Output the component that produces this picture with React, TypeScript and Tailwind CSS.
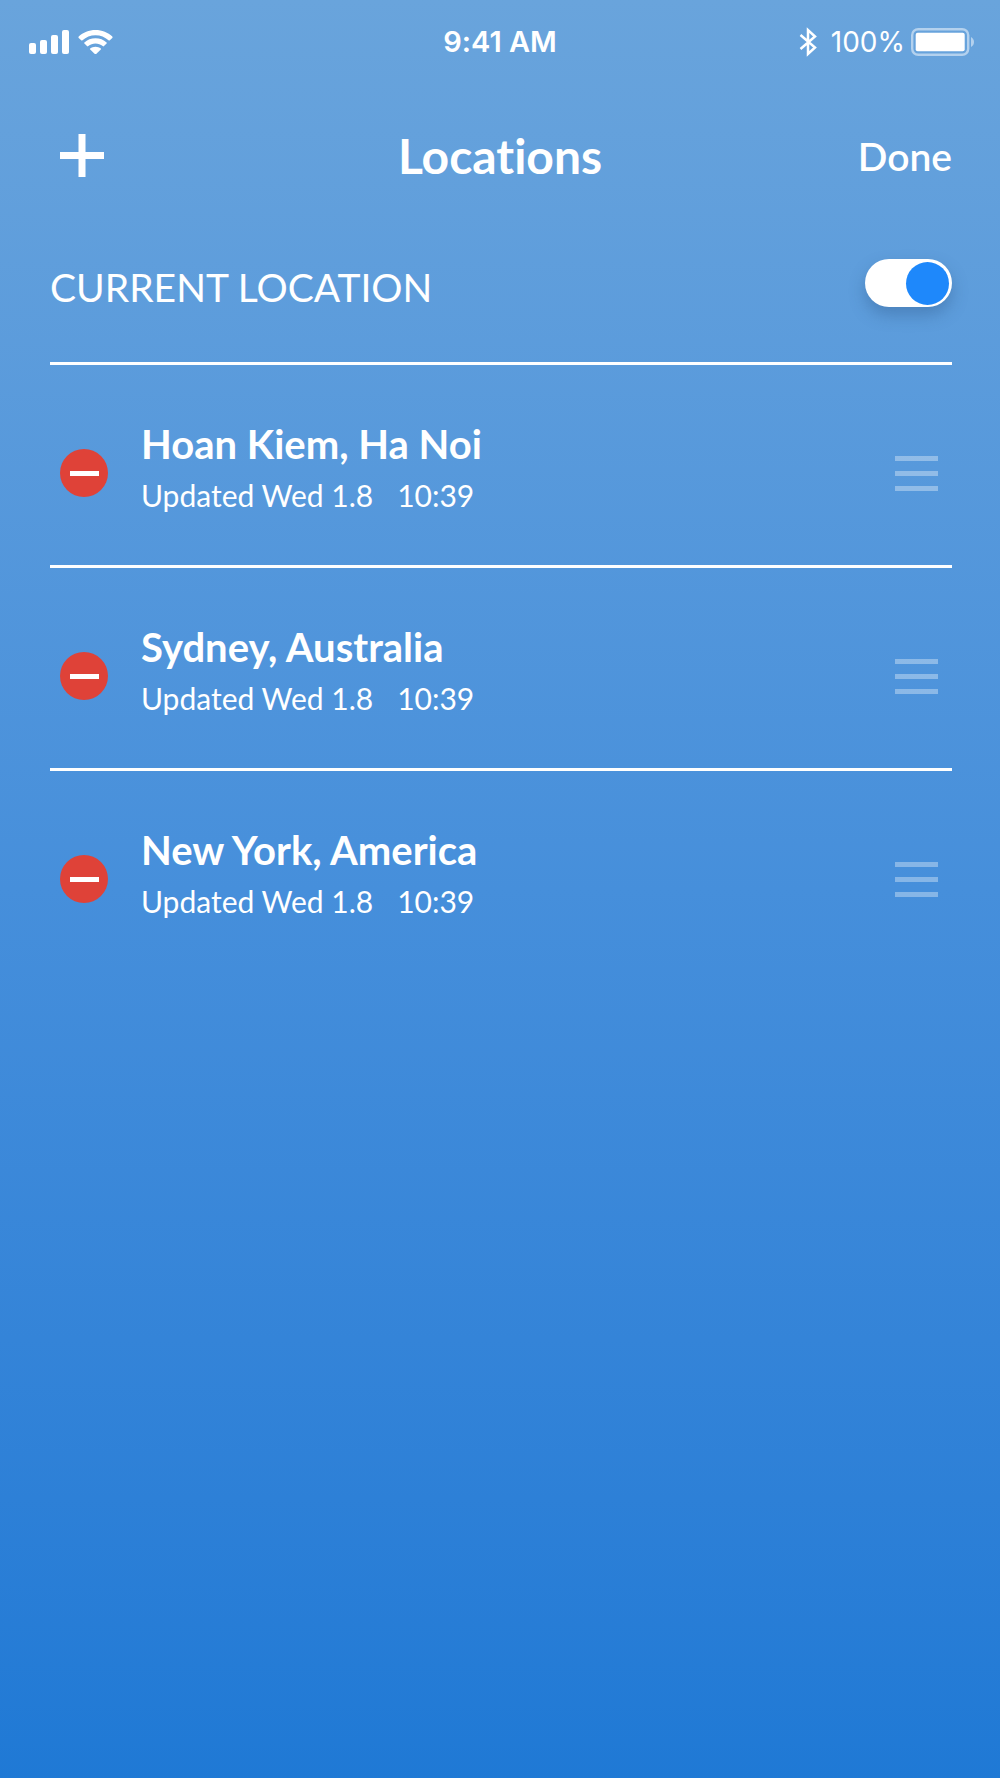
import { useState } from 'react';

const INITIAL_LOCATIONS = [
  { id: 1, name: 'Hoan Kiem, Ha Noi', date: 'Wed 1.8', time: '10:39' },
  { id: 2, name: 'Sydney, Australia', date: 'Wed 1.8', time: '10:39' },
  { id: 3, name: 'New York, America', date: 'Wed 1.8', time: '10:39' },
];

function StatusBar() {
  return (
    <div className="grid grid-cols-3 items-center px-[26px] pt-6 font-[Inter,sans-serif] leading-9">
      <div className="flex items-center gap-2 pl-0.5">
        <svg width="42" height="24" viewBox="0 0 42 24" fill="currentColor" aria-hidden="true">
          <rect x="1" y="13" width="7" height="11" rx="2" />
          <rect x="12" y="10" width="7" height="14" rx="2" />
          <rect x="23" y="5" width="7" height="19" rx="2" />
          <rect x="34" y="0" width="7" height="24" rx="2" />
        </svg>
        <svg width="35" height="24" viewBox="0 0 35 24" fill="currentColor" aria-hidden="true">
          <path d="M17.5 0C24 0 30 2.500 34.300 6.500Q35 7.200 34.300 7.900L31.800 10.300Q31.200 10.900 30.500 10.300C27 7.200 22.500 5.300 17.500 5.300S8 7.200 4.500 10.300Q3.800 10.900 3.200 10.300L.7 7.900Q0 7.200.7 6.500C5 2.500 11 0 17.500 0Z" />
          <path d="M17.500 8.200C21.800 8.200 25.700 9.800 28.600 12.400Q29.200 13 28.600 13.600L26 16.100Q25.400 16.700 24.700 16.100C22.700 14.400 20.200 13.400 17.500 13.400S12.300 14.400 10.300 16.100Q9.600 16.700 9 16.100L6.400 13.600Q5.800 13 6.400 12.400C9.300 9.800 13.200 8.200 17.500 8.200Z" />
          <path d="M17.500 16.700C19.500 16.700 21.400 17.400 22.800 18.500Q23.400 19 22.800 19.600L18.200 24Q17.500 24.600 16.800 24L12.200 19.600Q11.600 19 12.200 18.500C13.600 17.400 15.500 16.700 17.500 16.700Z" />
        </svg>
      </div>
      <p className="text-center text-[29px] font-semibold">9:41 AM</p>
      <div className="flex items-center justify-end">
        <svg className="mr-3.5" width="18" height="30" viewBox="0 0 18 30" fill="none" stroke="currentColor" strokeWidth="2.500" aria-hidden="true">
          <path d="M1.500 8 16 20.500 9 27V3L16 9.500 1.500 22" />
        </svg>
        <span className="mr-1.5 text-[28px]">100%</span>
        <svg width="63" height="28" viewBox="0 0 63 28" aria-hidden="true">
          <rect x="1.200" y="1.200" width="56" height="25.600" rx="6" fill="none" stroke="white" strokeOpacity=".5" strokeWidth="2.400" />
          <rect x="4.700" y="4.700" width="49" height="18.600" rx="2" fill="white" />
          <path d="M60 9C62 10 63 12 63 14S62 18 60 19Z" fill="white" fillOpacity=".5" />
        </svg>
      </div>
    </div>
  );
}

export default function App() {
  const [locations, setLocations] = useState(INITIAL_LOCATIONS);
  const [useCurrent, setUseCurrent] = useState(true);

  const removeLocation = (id: number) => {
    setLocations(locations.filter((location) => location.id !== id));
  };

  return (
    <div className="min-h-screen bg-linear-to-b from-[#69a4dc] via-[#468fdb] to-[#1f79d5] font-[Lato,sans-serif] text-white [font-variant-ligatures:none]">
      <StatusBar />

      <header className="grid grid-cols-3 items-center px-12 pt-16">
        <button aria-label="Add location" className="ml-3 justify-self-start">
          <svg width="44" height="44" viewBox="0 0 44 44" fill="none" stroke="currentColor" strokeWidth="7" aria-hidden="true">
            <path d="M22 0V43M0 21.500H44" />
          </svg>
        </button>
        <h1 className="text-center text-[48px] font-bold leading-[64px]">Locations</h1>
        <button className="justify-self-end text-[39px] font-semibold leading-[64px]">Done</button>
      </header>

      <main className="mx-12 pl-0.5">
        <label className="flex cursor-pointer items-center justify-between border-b-3 border-white pb-[47px] pt-[63px]">
          <span className="pt-2 text-[39px] leading-14">CURRENT LOCATION</span>
          <input
            type="checkbox"
            role="switch"
            checked={useCurrent}
            onChange={(e) => setUseCurrent(e.target.checked)}
            className="flex h-12 w-[87px] cursor-pointer appearance-none items-center rounded-full bg-white px-[3px] shadow-[0_8px_16px_rgba(40,80,130,0.35)] before:block before:size-[43px] before:rounded-full before:bg-gray-400 checked:before:ml-auto checked:before:bg-[#1e88fb]"
          />
        </label>

        <ul>
          {locations.map((location) => (
            <li key={location.id} className="flex h-[203px] items-center border-b-3 border-white px-2.5 pt-4 last:border-transparent">
              <button
                aria-label={`Remove ${location.name}`}
                onClick={() => removeLocation(location.id)}
                className="flex size-12 shrink-0 items-center justify-center rounded-full bg-[#df4238]"
              >
                <span className="h-[5px] w-[29px] bg-white" />
              </button>
              <div className="ml-[33px] flex-1 pb-2">
                <h2 className="text-[40px] font-bold leading-[52px]">{location.name}</h2>
                <p className="flex gap-6 text-[30px] leading-[50px]">
                  <span>Updated {location.date}</span>
                  <span>{location.time}</span>
                </p>
              </div>
              <button aria-label={`Reorder ${location.name}`} className="mr-1 flex w-[43px] cursor-grab flex-col gap-2.5">
                <span className="h-[5px] bg-white/35" />
                <span className="h-[5px] bg-white/35" />
                <span className="h-[5px] bg-white/35" />
              </button>
            </li>
          ))}
        </ul>
      </main>
    </div>
  );
}
